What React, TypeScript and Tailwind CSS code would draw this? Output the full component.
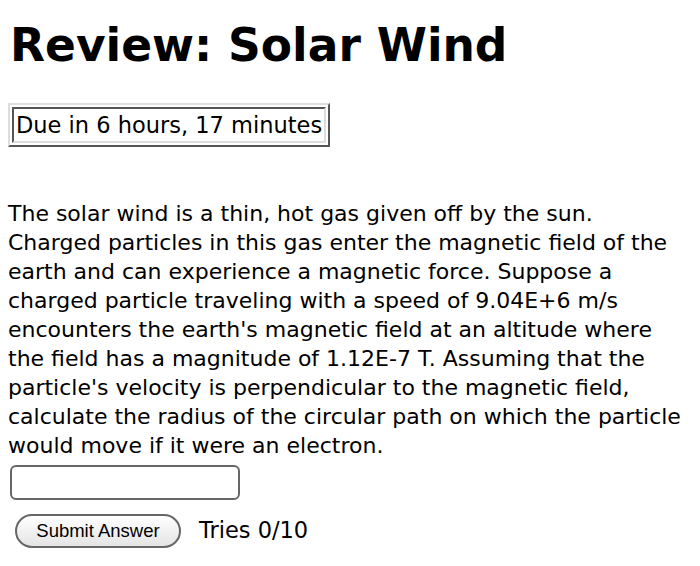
const lines = [
  'The solar wind is a thin, hot gas given off by the sun.',
  'Charged particles in this gas enter the magnetic field of the',
  'earth and can experience a magnetic force. Suppose a',
  'charged particle traveling with a speed of 9.04E+6 m/s',
  "encounters the earth's magnetic field at an altitude where",
  'the field has a magnitude of 1.12E-7 T. Assuming that the',
  "particle's velocity is perpendicular to the magnetic field,",
  'calculate the radius of the circular path on which the particle',
  'would move if it were an electron.',
]

export default function App() {
  return (
    <div className="min-h-screen bg-white text-black px-2" style={{ fontFamily: '"DejaVu Sans", Verdana, sans-serif' }}>
      <h1 className="text-[45.5px] font-bold leading-none pt-[23px] pl-[2px]">Review: Solar Wind</h1>

      <div className="mt-[34px] inline-block border-2 border-t-[#ddd] border-l-[#ddd] border-r-[#555] border-b-[#555] p-[2px]">
        <div className="border-2 border-t-[#555] border-l-[#555] border-r-[#ddd] border-b-[#ddd] px-[2px] text-[22.5px] leading-[32px]">
          Due in 6 hours, 17 minutes
        </div>
      </div>

      <p className="mt-[52px] text-[22px] leading-[29px]">
        {lines.map((l) => (
          <span key={l} className="block whitespace-nowrap">{l}</span>
        ))}
      </p>

      <input
        type="text"
        className="mt-[5px] ml-[2px] block w-[230px] h-[35px] rounded-[6px] border-2 border-[#666] bg-white outline-none"
      />

      <div className="mt-[14px] flex items-center gap-[18px] ml-[7px]">
        <button
          className="h-[34px] w-[166px] rounded-full border-2 border-[#666] bg-gradient-to-b from-white to-[#e4e4e4] text-[18.5px] text-black"
          style={{ fontFamily: '"Liberation Sans", Arial, sans-serif' }}
        >
          Submit Answer
        </button>
        <span className="text-[22.5px]">Tries 0/10</span>
      </div>
    </div>
  )
}
